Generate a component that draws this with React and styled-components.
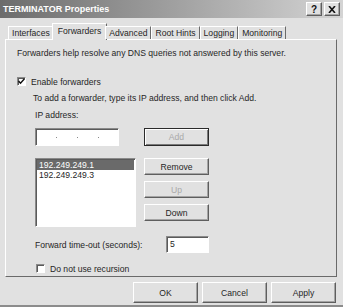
import React from "react";
import styled, { createGlobalStyle, css } from "styled-components";

const GlobalStyle = createGlobalStyle`
  html, body {
    margin: 0;
    padding: 0;
    background: #e1e1e1;
  }
  body {
    font-family: "Liberation Sans", Arial, sans-serif;
    font-size: 8.6px;
    color: #262626;
  }
`;

const tabs = ["Interfaces", "Forwarders", "Advanced", "Root Hints", "Logging", "Monitoring"];

function App() {
  return (
    <>
      <GlobalStyle />
      <Window>
        <TitleBar>
          <Title>TERMINATOR Properties</Title>
          <CaptionButtons>
            <CaptionButton>?</CaptionButton>
            <CaptionButton>
              <svg width="8" height="7" viewBox="0 0 8 7">
                <path d="M1 0 L7 7 M7 0 L1 7" stroke="#111" strokeWidth="1.6" />
              </svg>
            </CaptionButton>
          </CaptionButtons>
        </TitleBar>

        <TabStrip>
          {tabs.map((t) => (
            <Tab key={t} $active={t === "Forwarders"}>
              {t}
            </Tab>
          ))}
        </TabStrip>

        <Panel>
          <Line>Forwarders help resolve any DNS queries not answered by this server.</Line>

          <CheckRow $top={17}>
            <CheckBox>
              <svg width="7" height="7" viewBox="0 0 7 7">
                <path d="M0.5 3 L2.5 5.2 L6.5 0.8" stroke="#111" strokeWidth="1.5" fill="none" />
              </svg>
            </CheckBox>
            <span>Enable forwarders</span>
          </CheckRow>

          <Line $top={6} $indent={16}>
            To add a forwarder, type its IP address, and then click Add.
          </Line>
          <Line $top={6} $indent={18}>
            IP address:
          </Line>

          <InputRow>
            <IpField>
              <Dot />
              <Dot />
              <Dot />
            </IpField>
            <Button $disabled $default>
              Add
            </Button>
          </InputRow>

          <ListRow>
            <ListBox>
              <ListItem $selected>192.249.249.1</ListItem>
              <ListItem>192.249.249.3</ListItem>
            </ListBox>
            <ButtonColumn>
              <Button>Remove</Button>
              <Button $disabled>Up</Button>
              <Button>Down</Button>
            </ButtonColumn>
          </ListRow>

          <TimeoutRow>
            <span>Forward time-out (seconds):</span>
            <TextField>5</TextField>
          </TimeoutRow>

          <CheckRow $top={10} $indent={19}>
            <CheckBox />
            <span>Do not use recursion</span>
          </CheckRow>
        </Panel>

        <Footer>
          <DialogButton>OK</DialogButton>
          <DialogButton>Cancel</DialogButton>
          <DialogButton>Apply</DialogButton>
        </Footer>
      </Window>
    </>
  );
}

const raised = css`
  border: 1px solid;
  border-color: #ffffff #5e5e5e #5e5e5e #ffffff;
  box-shadow: inset -1px -1px 0 #a4a4a4;
`;

const sunken = css`
  border: 1px solid;
  border-color: #8a8a8a #ffffff #ffffff #8a8a8a;
  box-shadow: inset 1px 1px 0 #5a5a5a;
  background: #ffffff;
`;

const Window = styled.div`
  width: 343px;
  height: 307px;
  box-sizing: border-box;
  background: #e1e1e1;
  border-bottom: 2px solid #8c8c8c;
  display: flex;
  flex-direction: column;
`;

const TitleBar = styled.div`
  height: 18px;
  display: flex;
  align-items: center;
  justify-content: space-between;
  padding: 0 3px 0 3px;
  background: linear-gradient(to right, #6c6c6c, #9a9a9a 45%, #d4d4d4);
`;

const Title = styled.span`
  color: #ffffff;
  font-weight: bold;
  font-size: 9px;
`;

const CaptionButtons = styled.div`
  display: flex;
  gap: 2px;
`;

const CaptionButton = styled.div`
  ${raised};
  width: 14px;
  height: 12px;
  background: #e1e1e1;
  display: flex;
  align-items: center;
  justify-content: center;
  font-weight: bold;
  font-size: 10px;
  color: #111;
`;

const TabStrip = styled.div`
  display: flex;
  align-items: flex-end;
  height: 17px;
  margin-top: 4px;
  padding-left: 8px;
  position: relative;
  z-index: 1;
`;

const Tab = styled.div`
  height: 13px;
  line-height: 12px;
  padding: 0 3px;
  border-top: 1px solid #ffffff;
  border-left: 1px solid #ffffff;
  border-right: 1px solid #6a6a6a;
  box-sizing: border-box;
  background: #e1e1e1;
  white-space: nowrap;
  ${({ $active }) =>
    $active &&
    css`
      height: 17px;
      line-height: 14px;
      margin: 0 -2px -1px -2px;
      padding: 0 5px;
    `}
`;

const Panel = styled.div`
  margin: 0 6px 0 5px;
  height: 238px;
  box-sizing: border-box;
  border: 1px solid;
  border-color: #ffffff #6a6a6a #6a6a6a #ffffff;
  padding: 8px 11px 0 11px;
  display: flex;
  flex-direction: column;
`;

const Line = styled.div`
  line-height: 11px;
  white-space: nowrap;
  margin-top: ${({ $top }) => $top || 0}px;
  padding-left: ${({ $indent }) => $indent || 0}px;
`;

const CheckRow = styled.div`
  display: flex;
  align-items: center;
  gap: 5px;
  height: 11px;
  margin-top: ${({ $top }) => $top || 0}px;
  padding-left: ${({ $indent }) => $indent || 0}px;
`;

const CheckBox = styled.div`
  ${sunken};
  width: 9px;
  height: 9px;
  box-sizing: border-box;
  display: flex;
  align-items: center;
  justify-content: center;
`;

const InputRow = styled.div`
  display: flex;
  gap: 25px;
  margin-top: 7px;
  padding-left: 18px;
`;

const IpField = styled.div`
  ${sunken};
  width: 84px;
  height: 18px;
  box-sizing: border-box;
  display: flex;
  align-items: flex-end;
  justify-content: space-between;
  padding: 0 19px 7px 20px;
`;

const Dot = styled.span`
  width: 1px;
  height: 1px;
  background: #888;
`;

const Button = styled.div`
  ${raised};
  width: 65px;
  height: 17px;
  box-sizing: border-box;
  background: #e1e1e1;
  display: flex;
  align-items: center;
  justify-content: center;
  color: ${({ $disabled }) => ($disabled ? "#a9a9a9" : "#262626")};
  ${({ $default }) =>
    $default &&
    css`
      height: 18px;
      border: 1px solid #2a2a2a;
      box-shadow: inset 1px 1px 0 #ffffff, inset -1px -1px 0 #7a7a7a;
    `}
`;

const ListRow = styled.div`
  display: flex;
  gap: 8px;
  margin-top: 12px;
  padding-left: 18px;
`;

const ListBox = styled.div`
  ${sunken};
  width: 101px;
  height: 69px;
  box-sizing: border-box;
  padding: 1px 1px;
`;

const ListItem = styled.div`
  height: 10px;
  line-height: 10px;
  padding-left: 2px;
  ${({ $selected }) =>
    $selected &&
    css`
      background: #6a6a6a;
      color: #ffffff;
    `}
`;

const ButtonColumn = styled.div`
  display: flex;
  flex-direction: column;
  gap: 6px;
`;

const TimeoutRow = styled.div`
  display: flex;
  align-items: center;
  margin-top: 9px;
  padding-left: 18px;

  span {
    width: 131px;
  }
`;

const TextField = styled.div`
  ${sunken};
  width: 43px;
  height: 17px;
  box-sizing: border-box;
  padding: 2px 0 0 3px;
  line-height: 11px;
`;

const Footer = styled.div`
  display: flex;
  justify-content: flex-end;
  gap: 4px;
  margin-top: 5px;
  padding-right: 7px;
`;

const DialogButton = styled.div`
  ${raised};
  width: 65px;
  height: 21px;
  box-sizing: border-box;
  background: #e1e1e1;
  display: flex;
  align-items: center;
  justify-content: center;
`;

export default App;
